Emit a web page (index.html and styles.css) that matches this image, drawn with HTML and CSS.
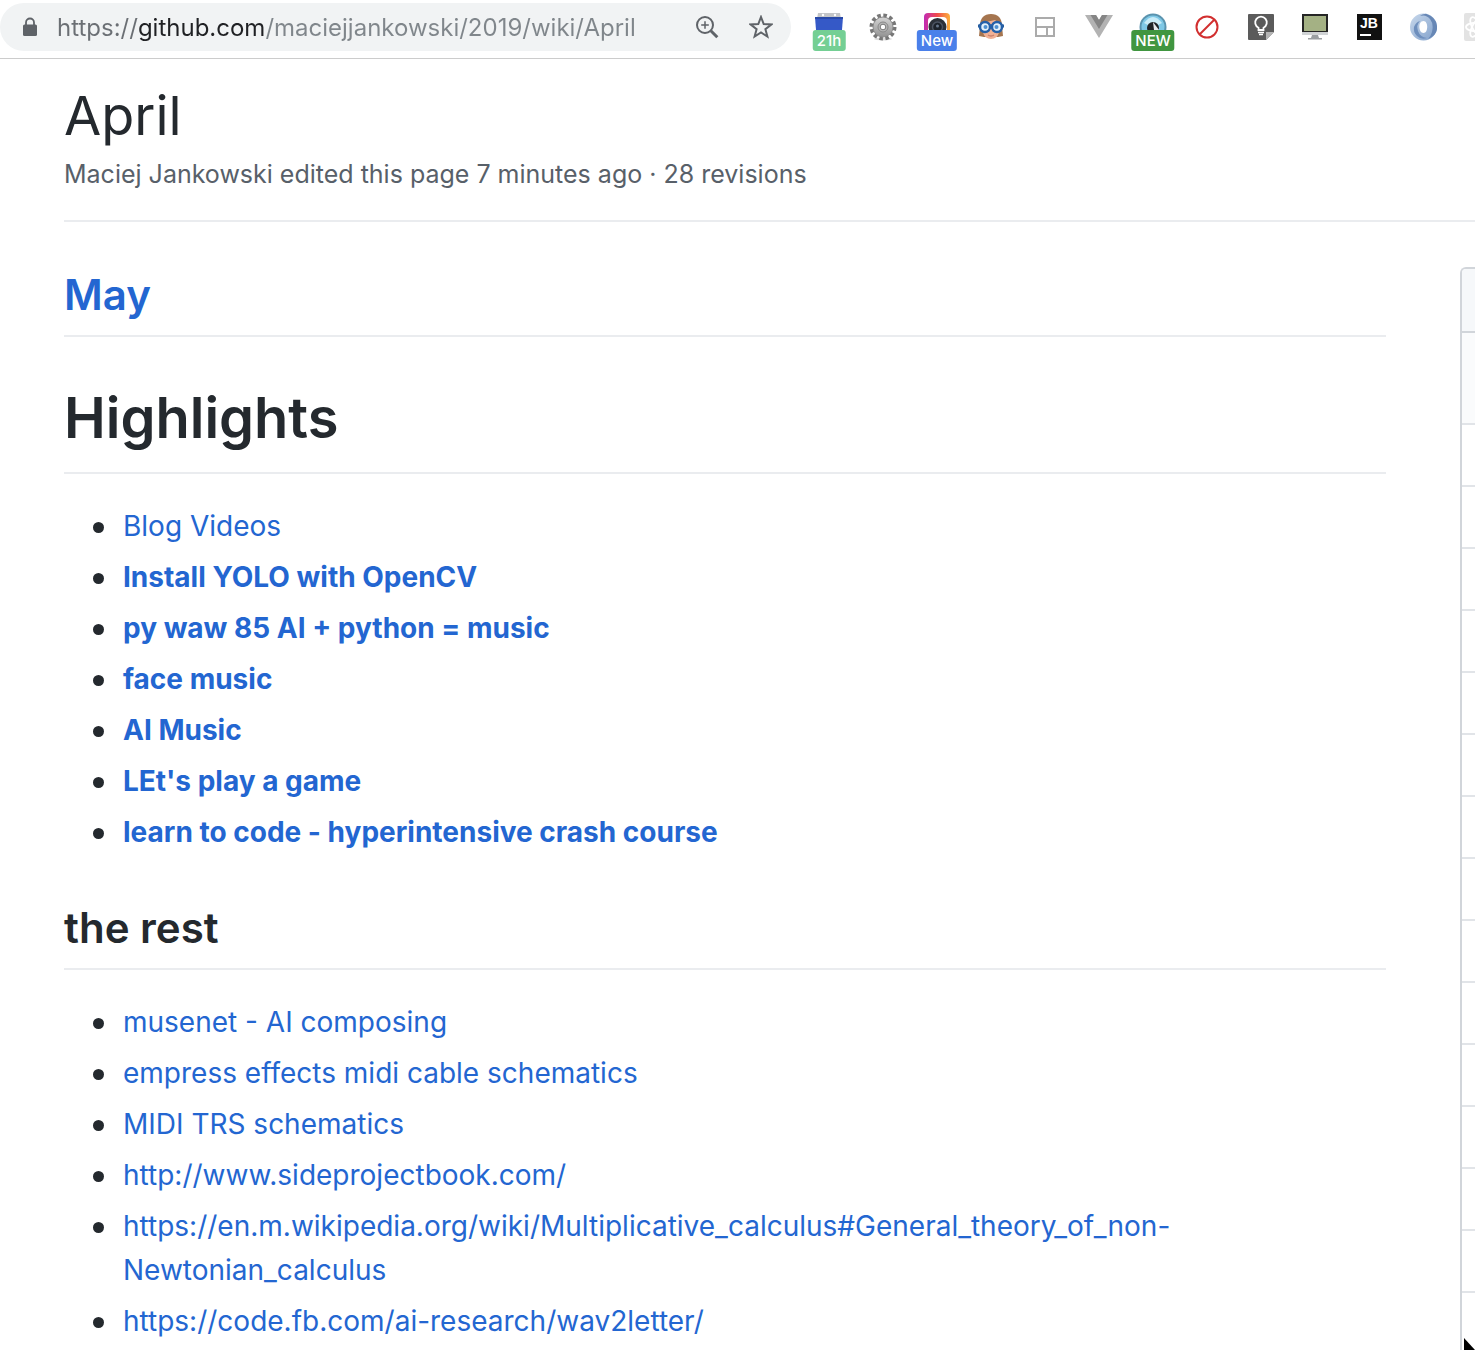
FILE: index.html
```html
<!DOCTYPE html>
<html lang="en">

<head>
    <meta charset="UTF-8">
    <meta name="viewport" content="width=device-width, initial-scale=1.0">
    <title>April</title>
    <link rel="stylesheet" href="styles.css">
</head>

<body>
    <header class="toolbar">
        <form class="omnibox">
            <svg class="lock" viewBox="0 0 14 20" aria-hidden="true">
                <path d="M3 8V5.500a4 4 0 0 1 8 0V8" fill="none" stroke="#5f6368" stroke-width="1.800" />
                <rect x="0" y="7.500" width="14" height="11.500" rx="1.500" fill="#5f6368" />
            </svg>
            <input class="url" type="text" aria-label="Address" value="https://github.com/maciejjankowski/2019/wiki/April">
            <button class="omni-btn" type="button" aria-label="Zoom">
                <svg viewBox="0 0 24 24" fill="none" stroke="#5f6368" stroke-width="2">
                    <circle cx="10" cy="10" r="8" />
                    <path d="M15.800 15.800l6.500 6.500" stroke-width="3" />
                    <path d="M10 6.200v7.600M6.200 10h7.600" stroke-width="1.500" />
                </svg>
            </button>
            <button class="omni-btn" type="button" aria-label="Bookmark this page">
                <svg viewBox="0 0 24 24">
                    <path d="M12 2l2.700 7.100 7.600.4-5.900 4.700 2 7.400L12 17.500l-6.400 4.100 2-7.400L1.700 9.500l7.600-.4z" fill="none" stroke="#5f6368" stroke-width="2" />
                </svg>
            </button>
        </form>
        <div class="extensions">
            <button class="ext" type="button" aria-label="Calendar">
                <svg viewBox="0 0 28 28">
                    <path d="M3 0h22l1 6H2z" fill="#c3c5c8" />
                    <circle cx="8" cy="2" r="1.200" fill="#fff" />
                    <circle cx="20" cy="2" r="1.200" fill="#fff" />
                    <path d="M0 4h28l-1 13H1z" fill="#3559c7" />
                    <path d="M0 4h28v2H0z" fill="#2949a8" />
                </svg>
                <span class="badge badge-mint">21h</span>
            </button>
            <button class="ext" type="button" aria-label="Settings">
                <svg viewBox="0 0 28 28">
                    <defs>
                        <linearGradient id="metal" x1="0" y1="0" x2="0" y2="1">
                            <stop offset="0" stop-color="#d4d4d4" />
                            <stop offset="1" stop-color="#929292" />
                        </linearGradient>
                    </defs>
                    <ellipse cx="14" cy="26" rx="9" ry="1.500" fill="#ddd" />
                    <circle cx="14" cy="14" r="11.500" fill="none" stroke="#777" stroke-width="4" stroke-dasharray="3.500 2.520" />
                    <circle cx="14" cy="14" r="10" fill="url(#metal)" stroke="#8a8a8a" />
                    <circle cx="14" cy="14" r="5" fill="#b5b5b5" stroke="#888" />
                    <circle cx="14" cy="14" r="2.800" fill="#fff" stroke="#777" />
                </svg>
            </button>
            <button class="ext" type="button" aria-label="Camera">
                <svg viewBox="0 0 28 28">
                    <defs>
                        <linearGradient id="sunset">
                            <stop offset="0" stop-color="#c02bb5" />
                            <stop offset=".5" stop-color="#f04a4d" />
                            <stop offset="1" stop-color="#fbb03b" />
                        </linearGradient>
                    </defs>
                    <path d="M1 17V4a4 4 0 0 1 4-4h18a4 4 0 0 1 4 4v13z" fill="url(#sunset)" />
                    <path d="M5 17V8a4 4 0 0 1 4-4h11a4 4 0 0 1 4 4v9z" fill="#fff" />
                    <circle cx="14.500" cy="14" r="9" fill="#2b3038" />
                    <circle cx="14.500" cy="14" r="5" fill="#1c222b" stroke="#4b5361" stroke-width="1.500" />
                    <circle cx="14.500" cy="13" r="1.500" fill="#66758a" />
                </svg>
                <span class="badge badge-blue">New</span>
            </button>
            <button class="ext" type="button" aria-label="Face with glasses">
                <svg viewBox="0 0 28 28">
                    <path d="M2 23l1-10C3 5 7 1 14 1s11 4 11 12l1 10-5 1H7z" fill="#a5754f" />
                    <path d="M6 11l3-2 9-2 4 4v7c0 5-4 8-8 8s-8-3-8-8z" fill="#f1b195" />
                    <path d="M11 22q3 2 6 0" fill="none" stroke="#c97f6a" stroke-width="1.500" />
                    <path d="M1 13h26" stroke="#285d9b" stroke-width="3" />
                    <circle cx="8" cy="14" r="5" fill="#e4f1fa" stroke="#2560a8" stroke-width="2.500" />
                    <circle cx="20" cy="14" r="5" fill="#e4f1fa" stroke="#2560a8" stroke-width="2.500" />
                    <circle cx="8.500" cy="14" r="2" fill="#4d8fd0" />
                    <circle cx="19.500" cy="14" r="2" fill="#4d8fd0" />
                </svg>
            </button>
            <button class="ext" type="button" aria-label="Layout">
                <svg viewBox="0 0 28 28" fill="none" stroke="#ababab" stroke-width="2">
                    <path d="M5 5h18v18H5zM5 14h18M16 14v9" />
                </svg>
            </button>
            <button class="ext" type="button" aria-label="Vue">
                <svg viewBox="0 0 28 28">
                    <path d="M0 2h11l3 5 3-5h11L14 25z" fill="#b3b3b3" />
                    <path d="M5.500 2H11l3 5 3-5h5.500L14 16z" fill="#858585" />
                </svg>
            </button>
            <button class="ext" type="button" aria-label="Eye">
                <svg viewBox="0 0 28 28">
                    <circle cx="14" cy="14" r="13.500" fill="#5a93ae" />
                    <circle cx="14" cy="14" r="11.500" fill="#7fc8e6" />
                    <path d="M5 10q9-12 18 0l-4 2H9z" fill="#c9ecf8" />
                    <circle cx="14" cy="15" r="6" fill="#202327" />
                    <path d="M14 9l6 8h-5z" fill="#e5e9ed" />
                </svg>
                <span class="badge badge-green">NEW</span>
            </button>
            <button class="ext" type="button" aria-label="Blocker">
                <svg viewBox="0 0 28 28" fill="none" stroke="#d22f2f" stroke-width="2">
                    <circle cx="14" cy="14" r="10.500" />
                    <path d="M21.500 6.500l-15 15" />
                </svg>
            </button>
            <button class="ext" type="button" aria-label="Keep note">
                <svg viewBox="0 0 28 28">
                    <path d="M2 1h24q1 0 1 1v17l-8 8H2q-1 0-1-1V2q0-1 1-1z" fill="#5b5b5b" />
                    <path d="M19 27v-8h8z" fill="#b5b5b5" />
                    <path d="M11.500 17v-2.300a5.800 5.800 0 1 1 5 0V17z" fill="none" stroke="#fff" stroke-width="1.800" />
                    <path d="M11 19.500h6M12 21.500h4" stroke="#fff" stroke-width="1.500" />
                </svg>
            </button>
            <button class="ext" type="button" aria-label="Monitor">
                <svg viewBox="0 0 28 28">
                    <path d="M1 1h26v19H1z" fill="#252525" />
                    <path d="M3 3h22v15H3z" fill="#a4b184" />
                    <path d="M1 19h26v3H1z" fill="#d0d3d5" />
                    <path d="M11 22h6l1 3h3v1.500H7V25h3z" fill="#9b9fa2" />
                </svg>
            </button>
            <button class="ext" type="button" aria-label="JetBrains">
                <svg viewBox="0 0 28 28">
                    <path d="M2 1h25v26H2z" fill="#111" />
                    <text class="jb" x="5" y="15">JB</text>
                    <path d="M5 21h11v2H5z" fill="#fff" />
                </svg>
            </button>
            <button class="ext" type="button" aria-label="Rings">
                <svg viewBox="0 0 28 28" fill="none">
                    <defs>
                        <linearGradient id="ring" x1="0" y1="0" x2="1" y2="1">
                            <stop offset="0" stop-color="#c9d9ec" />
                            <stop offset="1" stop-color="#7f9fca" />
                        </linearGradient>
                    </defs>
                    <path fill-rule="evenodd" d="M14.500.500a13.500 13.500 0 1 1 0 27 13.500 13.500 0 1 1 0-27zm0 7.500c-6 0-5 12 0 12s5-12 0-12z" fill="url(#ring)" />
                    <path d="M11 3q6-2 10 3t2 13q-1 4-4 7 10-4 9-13T17 .800Q13 1 11 3z" fill="#6787b5" />
                    <path d="M11 8Q7 12 9 18t9 7q-6 2-10-2T5 14q2-5 6-6z" fill="#6e8fbd" />
                </svg>
            </button>
            <button class="ext ext-cut" type="button" aria-label="React">
                <svg viewBox="0 0 28 28">
                    <rect x="1" y="0" width="27" height="28" rx="2" fill="#e3e3e3" />
                    <g fill="none" stroke="#fff" stroke-width="1.800">
                        <ellipse cx="14" cy="14" rx="11" ry="4.500" />
                        <ellipse cx="14" cy="14" rx="11" ry="4.500" transform="rotate(60 14 14)" />
                        <ellipse cx="14" cy="14" rx="11" ry="4.500" transform="rotate(120 14 14)" />
                    </g>
                </svg>
            </button>
        </div>
    </header>

    <main class="wiki">
        <div class="wiki-header">
            <h1 class="wiki-title">April</h1>
            <p class="wiki-meta">Maciej Jankowski edited this page 7 minutes ago · 28 revisions</p>
        </div>
        <div class="wiki-content">
            <article class="markdown">
                <h2><a href="#">May</a></h2>
                <h1>Highlights</h1>
                <ul>
                    <li><a href="#">Blog Videos</a></li>
                    <li><a href="#"><strong>Install YOLO with OpenCV</strong></a></li>
                    <li><a href="#"><strong>py waw 85 AI + python = music</strong></a></li>
                    <li><a href="#"><strong>face music</strong></a></li>
                    <li><a href="#"><strong>AI Music</strong></a></li>
                    <li><a href="#"><strong>LEt's play a game</strong></a></li>
                    <li><a href="#"><strong>learn to code - hyperintensive crash course</strong></a></li>
                </ul>
                <h2>the rest</h2>
                <ul>
                    <li><a href="#">musenet - AI composing</a></li>
                    <li><a href="#">empress effects midi cable schematics</a></li>
                    <li><a href="#">MIDI TRS schematics</a></li>
                    <li><a href="#">http://www.sideprojectbook.com/</a></li>
                    <li><a href="#">https://en.m.wikipedia.org/wiki/Multiplicative_calculus#General_theory_of_non-Newtonian_calculus</a></li>
                    <li><a href="#">https://code.fb.com/ai-research/wav2letter/</a></li>
                </ul>
            </article>
            <aside class="pages-box">
                <div class="pages-head"></div>
                <div class="pages-filter"></div>
                <div class="pages-row"></div>
                <div class="pages-row"></div>
                <div class="pages-row"></div>
                <div class="pages-row"></div>
                <div class="pages-row"></div>
                <div class="pages-row"></div>
                <div class="pages-row"></div>
                <div class="pages-row"></div>
                <div class="pages-row"></div>
                <div class="pages-row"></div>
                <div class="pages-row"></div>
                <div class="pages-row"></div>
                <div class="pages-row"></div>
                <div class="pages-row"></div>
                <div class="pages-row"></div>
            </aside>
        </div>
    </main>

    <svg class="cursor" viewBox="0 0 12 12" aria-hidden="true">
        <path d="M1 0v12h11z" fill="#000" />
    </svg>
</body>

</html>
```
FILE: styles.css
```css
* {
    margin: 0;
    padding: 0;
    box-sizing: border-box;
}

body {
    font-family: Inter, "Liberation Sans", sans-serif;
    font-size: 28px;
    line-height: 44px;
    color: #24292e;
    background: #fff;
    height: 100vh;
    overflow: hidden;
}

button {
    border: none;
    background: none;
    cursor: pointer;
}

a {
    color: #2366d1;
    text-decoration: none;
}

/* Browser toolbar */
.toolbar {
    display: flex;
    align-items: center;
    height: 59px;
    padding-bottom: 4px;
    border-bottom: 1px solid #ccc;
}

.omnibox {
    display: flex;
    align-items: center;
    flex: 1;
    min-width: 0;
    height: 48px;
    padding: 0 16px 0 23px;
    border-radius: 24px;
    background: #f1f3f4;
}

.lock {
    width: 14px;
    height: 20px;
    margin-right: 20px;
}

.url {
    flex: 1;
    min-width: 0;
    height: 40px;
    border: none;
    outline: none;
    font-family: inherit;
    font-size: 24px;
    color: #80868b;
    /* scheme, host and path each get their own grey */
    background: linear-gradient(90deg, #6b6f74 80px, #202124 80px 209px, #80868b 209px);
    -webkit-background-clip: text;
    background-clip: text;
    -webkit-text-fill-color: transparent;
}

.omni-btn {
    width: 28px;
    height: 28px;
    margin-left: 26px;
    padding: 2px;
}

.omni-btn svg {
    display: block;
    width: 24px;
}

.extensions {
    display: flex;
    flex: none;
    gap: 26px;
    margin-left: 24px;
}

.ext {
    position: relative;
    width: 28px;
    height: 28px;
}

.ext svg {
    display: block;
    width: 28px;
}

/* last icon runs under the window edge */
.ext-cut {
    width: 12px;
    overflow: hidden;
}

.jb {
    font-size: 14px;
    font-weight: 700;
    fill: #fff;
}

.badge {
    position: absolute;
    top: 17px;
    left: 50%;
    transform: translateX(-50%);
    padding: 0 4px;
    border-radius: 3px;
    font-family: Inter, sans-serif;
    font-size: 15px;
    font-weight: 500;
    line-height: 21px;
    color: #fff;
}

.badge-mint {
    background: #74cf94;
}

.badge-blue {
    background: #4a80ea;
}

.badge-green {
    background: #409640;
}

/* Wiki page */
.wiki {
    padding-left: 64px;
}

.wiki-header {
    padding: 21px 0 24px;
    border-bottom: 2px solid #eaecef;
}

.wiki-title {
    font-size: 54px;
    font-weight: 400;
    line-height: 72px;
}

.wiki-meta {
    color: #586069;
    font-size: 25px;
}

.wiki-content {
    display: flex;
    gap: 74px;
    padding-top: 45px;
}

.markdown {
    flex: 1;
    min-width: 0;
}

.markdown h1,
.markdown h2 {
    font-weight: 600;
    border-bottom: 2px solid #eaecef;
    margin-bottom: 30px;
}

.markdown h1 {
    font-size: 56px;
    line-height: 72px;
    margin-top: 45px;
    padding-bottom: 18px;
}

.markdown h2 {
    font-size: 42px;
    line-height: 56px;
    margin-top: 46px;
    padding-bottom: 12px;
}

.markdown h2:first-child {
    margin-top: 0;
}

.markdown ul {
    padding-left: 59px;
    list-style: none;
}

.markdown li {
    position: relative;
}

.markdown li::before {
    content: "";
    position: absolute;
    top: 18px;
    left: -30px;
    width: 11px;
    height: 11px;
    border-radius: 50%;
    background: #24292e;
}

.markdown li + li {
    margin-top: 7px;
}

.markdown strong {
    font-weight: 700;
}

/* narrow strip of the pages list, open on the right */
.pages-box {
    width: 15px;
    flex: none;
    border: 2px solid #d1d5da;
    border-right: none;
    border-radius: 6px 0 0 6px;
    overflow: hidden;
}

.pages-head {
    height: 64px;
    background: #f6f8fa;
    border-bottom: 2px solid #d1d5da;
}

.pages-filter {
    height: 90px;
    background: #fafbfc;
}

.pages-row {
    height: 62px;
    border-top: 2px solid #e1e4e8;
}

/* Mouse pointer */
.cursor {
    position: fixed;
    right: 0;
    bottom: 0;
    width: 12px;
    height: 12px;
}
```
